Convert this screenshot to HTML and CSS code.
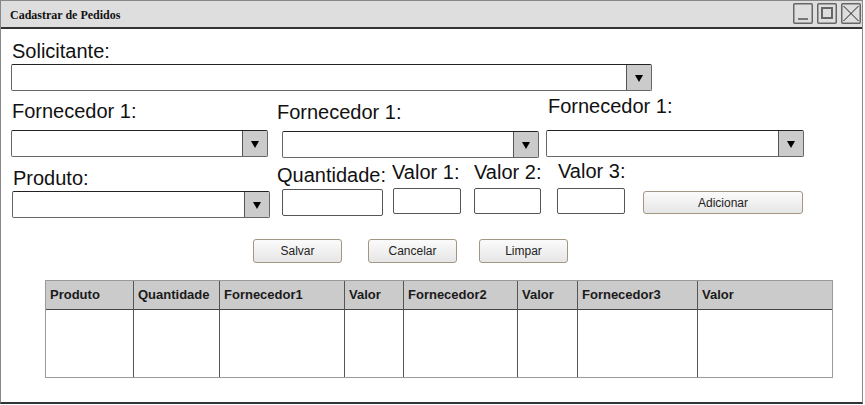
FILE: index.html
```html
<!DOCTYPE html>
<html>
<head>
<meta charset="utf-8">
<link rel="stylesheet" href="styles.css">
</head>
<body>
<div class="window">
  <div class="titlebar">
    <span class="title">Cadastrar de Pedidos</span>
    <div class="controls">
      <span class="ctl"><svg width="20" height="21" viewBox="0 0 20 21"><rect x="0.75" y="0.75" width="18.5" height="19.5" rx="1" fill="none" stroke="#666" stroke-width="1.5"/><line x1="5" y1="16" x2="15" y2="16" stroke="#777" stroke-width="2"/></svg></span>
      <span class="ctl"><svg width="20" height="21" viewBox="0 0 20 21"><rect x="0.75" y="0.75" width="18.5" height="19.5" rx="1" fill="none" stroke="#666" stroke-width="1.5"/><rect x="5" y="5" width="10" height="10" fill="none" stroke="#666" stroke-width="2"/></svg></span>
      <span class="ctl"><svg width="20" height="21" viewBox="0 0 20 21"><rect x="0.75" y="0.75" width="18.5" height="19.5" rx="1" fill="none" stroke="#666" stroke-width="1.5"/><line x1="2.5" y1="3" x2="17.5" y2="18" stroke="#222" stroke-width="1"/><line x1="17.5" y1="3" x2="2.5" y2="18" stroke="#222" stroke-width="1"/></svg></span>
    </div>
  </div>

  <div class="content">
    <div class="sol">
      <div class="lbl sol-lbl">Solicitante:</div>
      <div class="select sol-sel"><span class="drop"><i class="tri"></i></span></div>
    </div>

    <div class="row row2">
      <div class="col r2c1">
        <div class="lbl">Fornecedor 1:</div>
        <div class="select"><span class="drop"><i class="tri"></i></span></div>
      </div>
      <div class="col r2c2">
        <div class="lbl">Fornecedor 1:</div>
        <div class="select"><span class="drop"><i class="tri"></i></span></div>
      </div>
      <div class="col r2c3">
        <div class="lbl">Fornecedor 1:</div>
        <div class="select"><span class="drop"><i class="tri"></i></span></div>
      </div>
    </div>

    <div class="row row3">
      <div class="col r3p">
        <div class="lbl">Produto:</div>
        <div class="select"><span class="drop"><i class="tri"></i></span></div>
      </div>
      <div class="col r3q">
        <div class="lbl">Quantidade:</div>
        <div class="input"></div>
      </div>
      <div class="col r3v1">
        <div class="lbl">Valor 1:</div>
        <div class="input"></div>
      </div>
      <div class="col r3v2">
        <div class="lbl">Valor 2:</div>
        <div class="input"></div>
      </div>
      <div class="col r3v3">
        <div class="lbl">Valor 3:</div>
        <div class="input"></div>
      </div>
      <div class="btn add">Adicionar</div>
    </div>

    <div class="row actions">
      <div class="btn b-salvar">Salvar</div>
      <div class="btn b-cancelar">Cancelar</div>
      <div class="btn b-limpar">Limpar</div>
    </div>

    <div class="grid">
      <div class="th first">Produto</div>
      <div class="th">Quantidade</div>
      <div class="th">Fornecedor1</div>
      <div class="th">Valor</div>
      <div class="th">Fornecedor2</div>
      <div class="th">Valor</div>
      <div class="th">Fornecedor3</div>
      <div class="th">Valor</div>
      <div class="td first"></div>
      <div class="td"></div>
      <div class="td"></div>
      <div class="td"></div>
      <div class="td"></div>
      <div class="td"></div>
      <div class="td"></div>
      <div class="td"></div>
    </div>
  </div>
</div>
</body>
</html>
```

FILE: styles.css
```css
html, body {
  margin: 0;
  padding: 0;
  background: #fff;
}

.window {
  width: 863px;
  height: 404px;
  box-sizing: border-box;
  border: 1px solid #888;
  border-bottom: 2px solid #333;
  background: #fff;
  font-family: "Liberation Sans", Arial, sans-serif;
  color: #111;
}

.titlebar {
  height: 26px;
  background: #dedede;
  border-bottom: 2px solid #333;
  display: flex;
  justify-content: space-between;
  align-items: flex-start;
}

.title {
  font-family: "Liberation Serif", "Times New Roman", serif;
  font-weight: bold;
  font-size: 12px;
  line-height: 14px;
  margin-top: 7px;
  margin-left: 9px;
  color: #111;
}

.controls {
  display: flex;
  gap: 4px;
  margin-top: 2px;
  margin-right: 1px;
}

.ctl {
  display: block;
  width: 20px;
  height: 21px;
}
.ctl svg { display: block; }

.content {
  display: flex;
  flex-direction: column;
  align-items: flex-start;
}

.lbl {
  font-size: 20px;
  line-height: 23px;
  white-space: nowrap;
  color: #111;
}

.select {
  box-sizing: border-box;
  height: 27px;
  border: 1px solid #666;
  border-top-color: #222;
  border-radius: 2px;
  background: #fff;
  display: flex;
  justify-content: flex-end;
}

.drop {
  width: 24px;
  height: 100%;
  background: #cbcbcb;
  border-left: 1px solid #555;
  display: flex;
  align-items: center;
  justify-content: center;
}

.tri {
  width: 0;
  height: 0;
  border-left: 4px solid transparent;
  border-right: 4px solid transparent;
  border-top: 7px solid #000;
  margin-top: 1px;
}

.input {
  box-sizing: border-box;
  border: 1px solid #555;
  border-radius: 2px;
  background: #fff;
}

/* Solicitante */
.sol {
  margin-top: 11px;
  margin-left: 10px;
  display: flex;
  flex-direction: column;
}
.sol-lbl { margin-left: 1px; }
.sol-sel { width: 641px; margin-top: 1px; }

.row {
  display: flex;
  align-items: flex-start;
}

.col {
  display: flex;
  flex-direction: column;
  align-items: flex-start;
}

/* Row 2 */
.r2c1 { margin-left: 10px; width: 257px; }
.r2c1 .lbl { margin-left: 1px; margin-top: 9px; }
.r2c1 .select { width: 257px; margin-top: 7px; }

.r2c2 { margin-left: 9px; width: 262px; }
.r2c2 .lbl { margin-top: 10px; }
.r2c2 .select { width: 257px; margin-top: 7px; margin-left: 5px; }

.r2c3 { margin-left: 7px; width: 258px; }
.r2c3 .lbl { margin-left: 2px; margin-top: 4px; }
.r2c3 .select { width: 258px; margin-top: 12px; }

/* Row 3 */
.r3p { margin-left: 11px; width: 258px; }
.r3p .lbl { margin-left: 1px; margin-top: 9px; }
.r3p .select { width: 258px; margin-top: 1px; }

.r3q { margin-left: 7px; width: 106px; }
.r3q .lbl { margin-top: 6px; }
.r3q .input { width: 101px; height: 27px; margin-top: 2px; margin-left: 5px; }

.r3v1 { margin-left: 9px; width: 69px; }
.r3v1 .lbl { margin-top: 3px; }
.r3v1 .input { width: 68px; height: 26px; margin-top: 4px; margin-left: 1px; }

.r3v2 { margin-left: 13px; width: 67px; }
.r3v2 .lbl { margin-top: 3px; }
.r3v2 .input { width: 67px; height: 26px; margin-top: 4px; }

.r3v3 { margin-left: 16px; width: 68px; }
.r3v3 .lbl { margin-top: 2px; margin-left: 1px; }
.r3v3 .input { width: 68px; height: 26px; margin-top: 5px; }

.btn {
  box-sizing: border-box;
  height: 24px;
  border: 1px solid #a39685;
  border-radius: 3px;
  background: linear-gradient(#fbfbfb, #e6e6e6);
  font-size: 12px;
  color: #222;
  display: flex;
  align-items: center;
  justify-content: center;
}

.add {
  margin-left: 18px;
  margin-top: 33px;
  width: 160px;
  height: 23px;
}

/* Action buttons */
.actions { margin-top: 21px; }
.b-salvar { margin-left: 252px; width: 89px; }
.b-cancelar { margin-left: 26px; width: 89px; }
.b-limpar { margin-left: 22px; width: 89px; }

/* Table */
.grid {
  margin-top: 17px;
  margin-left: 44px;
  width: 788px;
  box-sizing: border-box;
  display: grid;
  grid-template-columns: 87px 86px 125px 59px 114px 60px 120px 135px;
  grid-template-rows: 29px 67px;
  border: 1px solid #9a9a9a;
}

.th, .td {
  box-sizing: border-box;
  border-left: 1px solid #555;
}
.th.first, .td.first { border-left: none; }

.th {
  background: #cbcbcb;
  border-bottom: 1px solid #444;
  font-weight: bold;
  font-size: 13px;
  color: #1a1a1a;
  display: flex;
  align-items: center;
  padding-left: 4px;
  padding-bottom: 1px;
  white-space: nowrap;
}

.td { background: #fff; }
```
